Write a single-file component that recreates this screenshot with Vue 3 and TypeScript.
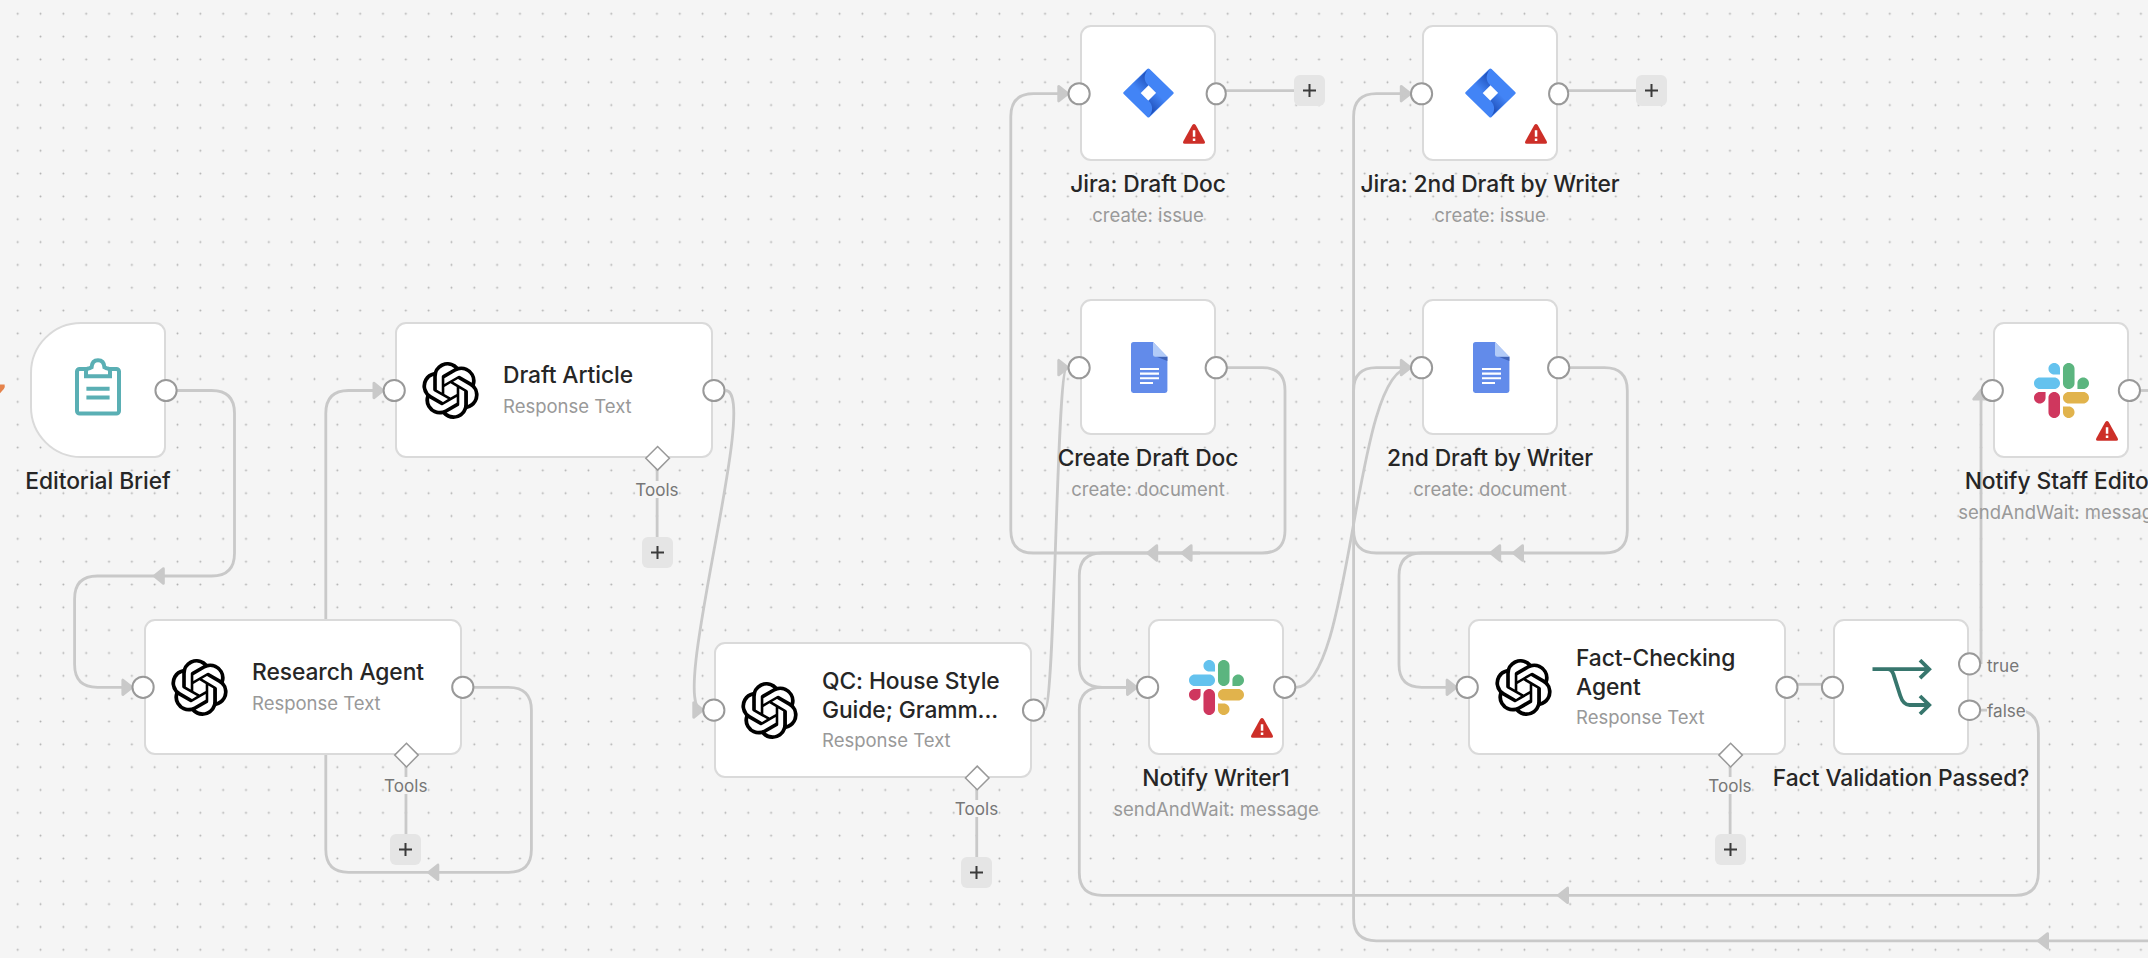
<script setup lang="ts">
type IconName = 'clipboard' | 'openai' | 'jira' | 'docs' | 'slack' | 'branch'

interface FlowNode {
  id: string
  x: number
  y: number
  icon: IconName
  lines: string[]
  sub?: string
  wide?: boolean
  trigger?: boolean
  input?: boolean
  output?: boolean
  addNext?: boolean
  warn?: boolean
}

interface Arrow {
  x: number
  y: number
  dir: 'left' | 'right' | 'up'
}

const GRID = 22.83
const R = 22.8
const NODE = 137

const gx = (column: number): number => 6.2 + column * GRID
const gy = (row: number): number => 2.5 + row * GRID

const nodes: FlowNode[] = [
  { id: 'brief', x: gx(1), y: gy(14), icon: 'clipboard', lines: ['Editorial Brief'], trigger: true, output: true },
  { id: 'research', x: gx(6), y: gy(27), icon: 'openai', lines: ['Research Agent'], sub: 'Response Text', wide: true, input: true, output: true },
  { id: 'draft', x: gx(17), y: gy(14), icon: 'openai', lines: ['Draft Article'], sub: 'Response Text', wide: true, input: true, output: true },
  { id: 'qc', x: gx(31), y: gy(28), icon: 'openai', lines: ['QC: House Style', 'Guide; Gramm...'], sub: 'Response Text', wide: true, input: true, output: true },
  { id: 'jira1', x: gx(47), y: gy(1), icon: 'jira', lines: ['Jira: Draft Doc'], sub: 'create: issue', input: true, addNext: true, warn: true },
  { id: 'jira2', x: gx(62), y: gy(1), icon: 'jira', lines: ['Jira: 2nd Draft by Writer'], sub: 'create: issue', input: true, addNext: true, warn: true },
  { id: 'doc1', x: gx(47), y: gy(13), icon: 'docs', lines: ['Create Draft Doc'], sub: 'create: document', input: true, output: true },
  { id: 'doc2', x: gx(62), y: gy(13), icon: 'docs', lines: ['2nd Draft by Writer'], sub: 'create: document', input: true, output: true },
  { id: 'writer', x: gx(50), y: gy(27), icon: 'slack', lines: ['Notify Writer1'], sub: 'sendAndWait: message', input: true, output: true, warn: true },
  { id: 'fact', x: gx(64), y: gy(27), icon: 'openai', lines: ['Fact-Checking', 'Agent'], sub: 'Response Text', wide: true, input: true, output: true },
  { id: 'if', x: gx(80), y: gy(27), icon: 'branch', lines: ['Fact Validation Passed?'], input: true },
  { id: 'staff', x: gx(87), y: gy(14), icon: 'slack', lines: ['Notify Staff Editor'], sub: 'sendAndWait: message', input: true, output: true, warn: true },
]

/** Orthogonal polyline whose corners are rounded with quadratic curves. */
function step(points: [number, number][]): string {
  let d = `M${points[0][0]} ${points[0][1]}`
  for (let i = 1; i < points.length - 1; i++) {
    const [px, py] = points[i - 1]
    const [cx, cy] = points[i]
    const [nx, ny] = points[i + 1]
    const ax = cx - Math.sign(cx - px) * R
    const ay = cy - Math.sign(cy - py) * R
    const bx = cx + Math.sign(nx - cx) * R
    const by = cy + Math.sign(ny - cy) * R
    d += `L${ax} ${ay}Q${cx} ${cy} ${bx} ${by}`
  }
  const last = points[points.length - 1]
  return `${d}L${last[0]} ${last[1]}`
}

function curve(x1: number, y1: number, x2: number, y2: number, pull: number): string {
  return `M${x1} ${y1}C${x1 + pull} ${y1} ${x2 - pull} ${y2} ${x2} ${y2}`
}

const edges: string[] = [
  step([[170, 390.5], [234.5, 390.5], [234.5, 576], [74.6, 576], [74.6, 687.3], [128, 687.3]]),
  step([[466, 687.3], [531.4, 687.3], [531.4, 872.3], [325.8, 872.3], [325.8, 390.5], [380, 390.5]]),
  curve(725.5, 390.5, 702.5, 710, 36),
  curve(1044.5, 710, 1067, 367.6, 11),
  step([[1220, 367.6], [1285, 367.6], [1285, 553], [1010.8, 553], [1010.8, 93.7], [1064, 93.7]]),
  step([[1200, 553], [1079.3, 553], [1079.3, 687.3], [1132, 687.3]]),
  curve(1296, 687.3, 1410, 367.6, 57),
  step([[1562, 367.6], [1627.3, 367.6], [1627.3, 553], [1353.6, 553], [1353.6, 93.7], [1406, 93.7]]),
  step([[1520, 553], [1399, 553], [1399, 687.3], [1452, 687.3]]),
  step([[2160, 940.9], [1353.6, 940.9], [1353.6, 367.6], [1406, 367.6]]),
  'M1797 684.3H1822',
  'M1981 664V398',
  step([[1972, 710.2], [2038.4, 710.2], [2038.4, 895.3], [1079.3, 895.3], [1079.3, 687.3], [1132, 687.3]]),
  'M2138 390.5H2160',
]

const arrows: Arrow[] = [
  { x: 152.8, y: 576, dir: 'left' },
  { x: 427.3, y: 872.3, dir: 'left' },
  { x: 1146.2, y: 553, dir: 'left' },
  { x: 1180.6, y: 553, dir: 'left' },
  { x: 1489.2, y: 553, dir: 'left' },
  { x: 1512, y: 553, dir: 'left' },
  { x: 1557, y: 895.3, dir: 'left' },
  { x: 2037, y: 940.9, dir: 'left' },
  { x: 133.4, y: 687.3, dir: 'right' },
  { x: 384.5, y: 390.5, dir: 'right' },
  { x: 704.3, y: 710, dir: 'right' },
  { x: 1069.3, y: 93.7, dir: 'right' },
  { x: 1411.8, y: 93.7, dir: 'right' },
  { x: 1069.3, y: 367.6, dir: 'right' },
  { x: 1411.8, y: 367.6, dir: 'right' },
  { x: 1138, y: 687.3, dir: 'right' },
  { x: 1457.6, y: 687.3, dir: 'right' },
  { x: 1981, y: 388.6, dir: 'up' },
]

const turn: Record<Arrow['dir'], number> = { right: 0, left: 180, up: -90 }

const place = (n: FlowNode) => ({ left: `${Math.round(n.x + 0.5)}px`, top: `${Math.round(n.y)}px` })

interface Port { x: number; y: number; rx: number; ry: number }

const ports: Port[] = nodes.flatMap((n) => {
  const list: Port[] = []
  const cy = n.y + 68.4
  const right = n.x + (n.wide ? GRID * 14 : NODE)
  if (n.input) list.push({ x: n.x - 0.1, y: cy, rx: 10.6, ry: 10.6 })
  if (n.output) list.push({ x: right, y: cy, rx: 10.6, ry: 10.6 })
  if (n.addNext) list.push({ x: right, y: cy, rx: 9.6, ry: 10.6 })
  if (n.id === 'if') {
    list.push({ x: right, y: 663.9, rx: 10.6, ry: 10.6 }, { x: right, y: 710.2, rx: 10.6, ry: 9.8 })
  }
  return list
})

const agents = nodes.filter((n) => n.wide)
const openEnded = nodes.filter((n) => n.addNext)
</script>

<template>
  <main class="canvas">
    <svg class="layer" width="2148" height="958" viewBox="0 0 2148 958">
      <defs>
        <pattern id="dots" :width="GRID" :height="GRID" patternUnits="userSpaceOnUse" x="6.3" y="2.35">
          <circle :cx="GRID / 2" :cy="GRID / 2" r="0.95" fill="#b0b0b0" />
        </pattern>
        <linearGradient id="jira-top" x1="24" y1="6" x2="10" y2="20" gradientUnits="userSpaceOnUse">
          <stop offset="0.1" stop-color="#2253bd" />
          <stop offset="0.9" stop-color="#4284f6" />
        </linearGradient>
        <linearGradient id="jira-bottom" x1="27" y1="43" x2="41" y2="29" gradientUnits="userSpaceOnUse">
          <stop offset="0.1" stop-color="#2253bd" />
          <stop offset="0.9" stop-color="#4284f6" />
        </linearGradient>
      </defs>
      <rect width="2148" height="958" fill="url(#dots)" />
      <path d="M0 384.5H4.6Q5.4 387 3.8 389L0 393.2Z" fill="#e5834b" />
      <g class="edges">
        <path v-for="(d, i) in edges" :key="i" :d="d" />
      </g>
      <path
        v-for="(a, i) in arrows"
        :key="`a${i}`"
        class="arrow"
        d="M-10.6 -7.3V7.3L-1.4 0Z"
        :transform="`translate(${a.x} ${a.y}) rotate(${turn[a.dir]})`"
      />
      <g class="edges">
        <path v-for="n in agents" :key="n.id" :d="`M${n.x + 262.8} ${n.y + 142}V${n.y + 216}`" />
        <path v-for="n in openEnded" :key="n.id" :d="`M${n.x + 142} ${n.y + 65.3}h74`" />
      </g>
    </svg>

    <section
      v-for="n in nodes"
      :key="n.id"
      class="node"
      :class="{ wide: n.wide, trigger: n.trigger }"
      :style="place(n)"
    >
      <div class="card">
        <svg v-if="n.icon === 'openai'" class="icon openai" viewBox="0 0 24 24">
          <path d="M22.2819 9.8211a5.9847 5.9847 0 0 0-.5157-4.9108 6.0462 6.0462 0 0 0-6.5098-2.9A6.0651 6.0651 0 0 0 4.9807 4.1818a5.9847 5.9847 0 0 0-3.9977 2.9 6.0462 6.0462 0 0 0 .7427 7.0966 5.98 5.98 0 0 0 .511 4.9107 6.051 6.051 0 0 0 6.5146 2.9001A5.9847 5.9847 0 0 0 13.2599 24a6.0557 6.0557 0 0 0 5.7718-4.2058 5.9894 5.9894 0 0 0 3.9977-2.9001 6.0557 6.0557 0 0 0-.7475-7.0729zm-9.022 12.6081a4.4755 4.4755 0 0 1-2.8764-1.0408l.1419-.0804 4.7783-2.7582a.7948.7948 0 0 0 .3927-.6813v-6.7369l2.02 1.1686a.071.071 0 0 1 .038.052v5.5826a4.504 4.504 0 0 1-4.4945 4.4944zm-9.6607-4.1254a4.4708 4.4708 0 0 1-.5346-3.0137l.142.0852 4.783 2.7582a.7712.7712 0 0 0 .7806 0l5.8428-3.3685v2.3324a.0804.0804 0 0 1-.0332.0615L9.74 19.9502a4.4992 4.4992 0 0 1-6.1408-1.6464zM2.3408 7.8956a4.485 4.485 0 0 1 2.3655-1.9728V11.6a.7664.7664 0 0 0 .3879.6765l5.8144 3.3543-2.0201 1.1685a.0757.0757 0 0 1-.071 0l-4.8303-2.7865A4.504 4.504 0 0 1 2.3408 7.872zm16.5963 3.8558L13.1038 8.364 15.1192 7.2a.0757.0757 0 0 1 .071 0l4.8303 2.7913a4.4944 4.4944 0 0 1-.6765 8.1042v-5.6772a.79.79 0 0 0-.407-.667zm2.0107-3.0231l-.142-.0852-4.7735-2.7818a.7759.7759 0 0 0-.7854 0L9.409 9.2297V6.8974a.0662.0662 0 0 1 .0284-.0615l4.8303-2.7866a4.4992 4.4992 0 0 1 6.6802 4.66zM8.3065 12.863l-2.02-1.1638a.0804.0804 0 0 1-.038-.0567V6.0742a4.4992 4.4992 0 0 1 7.3757-3.4537l-.142.0805L8.704 5.459a.7948.7948 0 0 0-.3927.6813zm1.0976-2.3654l2.602-1.4998 2.6069 1.4998v2.9994l-2.5974 1.4997-2.6067-1.4997Z" />
        </svg>
        <svg v-else-if="n.icon === 'clipboard'" class="icon clipboard" width="46" height="58" viewBox="0 0 46 58">
          <rect x="2" y="11" width="42" height="44.6" rx="2.6" />
          <path d="M11 18.3H35V13.5Q35 10.6 31.6 10.3L29.4 9.2Q29 2.2 23 2.2T16.6 9.2L14.4 10.3Q11 10.6 11 13.5Z" />
          <path d="M11.4 30.8H34.6M11.4 39.6H34.6" />
        </svg>
        <svg v-else-if="n.icon === 'jira'" class="icon jira" width="51" height="50" viewBox="0 0 51 50">
          <path fill="#4284f6" fill-rule="evenodd" d="M24.2 1Q25.4 0 26.6 1L50.2 23.9Q51.2 25 50.2 26.1L26.6 49Q25.4 50 24.2 49L.7 26.1Q-.3 25 .7 23.9ZM25.4 17.2 17.6 25 25.4 32.8 33.2 25Z" />
          <path fill="url(#jira-top)" d="M25.4 .7C20.6 6 20.2 12.4 25.4 17.2L17.6 25 9 16.5Z" />
          <path fill="url(#jira-bottom)" d="M25.4 49.3C30.2 44 30.6 37.6 25.4 32.8L33.2 25 41.8 33.5Z" />
        </svg>
        <svg v-else-if="n.icon === 'docs'" class="icon docs" width="37" height="51" viewBox="0 0 37 51">
          <path fill="#628bea" d="M2.6 0H22L36.4 15V48.6Q36.4 51 34 51H2.4Q0 51 0 48.6V2.6Q0 0 2.6 0Z" />
          <path fill="#3f63b8" d="M25 14.6H36.4V19Z" />
          <path fill="#b2cbf8" d="M22 0 36.4 14.8H24.2Q22 14.8 22 12.6Z" />
          <path fill="#fff" d="M9 26H28v2.1H9ZM9 30.6H28v2.1H9ZM9 35.2H28v2.1H9ZM9 39.9H22v2.1H9Z" />
        </svg>
        <svg v-else-if="n.icon === 'slack'" class="icon slack" width="55" height="55" viewBox="0 0 122.8 122.8">
          <path fill="#cf375e" d="M25.8 77.6c0 7.1-5.8 12.9-12.9 12.9S0 84.7 0 77.6s5.8-12.9 12.9-12.9h12.9v12.9zM32.3 77.6c0-7.1 5.8-12.9 12.9-12.9s12.9 5.8 12.9 12.9v32.3c0 7.1-5.8 12.9-12.9 12.9s-12.9-5.8-12.9-12.9V77.6z" />
          <path fill="#64c2ee" d="M45.2 25.8c-7.1 0-12.9-5.8-12.9-12.9S38.1 0 45.2 0s12.9 5.8 12.9 12.9v12.9H45.2zM45.2 32.3c7.1 0 12.9 5.8 12.9 12.9s-5.8 12.9-12.9 12.9H12.9C5.8 58.1 0 52.3 0 45.2s5.8-12.9 12.9-12.9h32.3z" />
          <path fill="#5bb57f" d="M97 45.2c0-7.1 5.8-12.9 12.9-12.9s12.9 5.8 12.9 12.9-5.8 12.9-12.9 12.9H97V45.2zM90.5 45.2c0 7.1-5.8 12.9-12.9 12.9s-12.9-5.8-12.9-12.9V12.9C64.7 5.8 70.5 0 77.6 0s12.9 5.8 12.9 12.9v32.3z" />
          <path fill="#e1b34c" d="M77.6 97c7.1 0 12.9 5.8 12.9 12.9s-5.8 12.9-12.9 12.9-12.9-5.8-12.9-12.9V97h12.9zM77.6 90.5c-7.1 0-12.9-5.8-12.9-12.9s5.8-12.9 12.9-12.9h32.3c7.1 0 12.9 5.8 12.9 12.9s-5.8 12.9-12.9 12.9H77.6z" />
        </svg>
        <svg v-else class="icon branch" width="60" height="56" viewBox="0 0 60 56">
          <path d="M.5 10.2H57.5M48 1.2 57.2 10.2 48 19.2M16 10.2Q19.6 10.4 21.4 15.2L28.2 36.5Q31.2 46 37.6 46H57.5M48 37 57.2 46 48 55" />
        </svg>

        <div v-if="n.wide" class="text">
          <span v-for="line in n.lines" :key="line" class="title">{{ line }}</span>
          <span class="sub">{{ n.sub }}</span>
        </div>

        <svg v-if="n.warn" class="warn" width="22" height="20" viewBox="0 0 22 20">
          <path fill="#cd2f28" d="M9.3 1Q11-1 12.7 1L21.7 17.2Q22.6 19.6 20.3 19.8H1.7Q-.6 19.6 .3 17.2Z" />
          <path fill="#fff" d="M9.8 6.2h2.5v6.6h-2.5ZM9.8 14.4h2.5v2.5h-2.5Z" />
        </svg>
      </div>
      <div v-if="!n.wide" class="caption">
        <span class="title">{{ n.lines[0] }}</span>
        <span v-if="n.sub" class="sub">{{ n.sub }}</span>
      </div>
    </section>

    <svg class="layer ports" width="2148" height="958" viewBox="0 0 2148 958">
      <ellipse v-for="(p, i) in ports" :key="i" :cx="p.x" :cy="p.y" :rx="p.rx" :ry="p.ry" />
      <path
        v-for="n in agents"
        :key="n.id"
        class="diamond"
        :d="`M${n.x + 263.3} ${n.y + 124.4}l11.8 11.8l-11.8 11.8l-11.8 -11.8Z`"
      />
    </svg>

    <template v-for="n in agents" :key="n.id">
      <span class="edge-label tools" :style="{ left: `${n.x + 262.6}px`, top: `${n.y + 158.4}px` }">Tools</span>
      <button class="add" :style="{ left: `${n.x + 247.3}px`, top: `${n.y + 215}px` }" aria-label="Add">
        <svg width="13" height="13" viewBox="0 0 13 13"><path d="M6.5 0V13M0 6.5H13" /></svg>
      </button>
    </template>
    <button
      v-for="n in openEnded"
      :key="n.id"
      class="add"
      :style="{ left: `${n.x + 214.8}px`, top: `${n.y + 50}px` }"
      aria-label="Add"
    >
      <svg width="13" height="13" viewBox="0 0 13 13"><path d="M6.5 0V13M0 6.5H13" /></svg>
    </button>
    <span class="edge-label yes">true</span>
    <span class="edge-label no">false</span>
  </main>
</template>

<style>
body {
  margin: 0;
  background: #f5f5f5;
}
</style>

<style scoped>
.canvas {
  position: relative;
  width: 2148px;
  height: 958px;
  overflow: hidden;
  background: #f5f5f5;
  font-family: Inter, "Liberation Sans", sans-serif;
}

.layer {
  position: absolute;
  inset: 0;
}

.edges path {
  fill: none;
  stroke: #c9c9c9;
  stroke-width: 2.8;
}

.arrow {
  fill: #c9c9c9;
  stroke: #c9c9c9;
  stroke-width: 2.8;
  stroke-linejoin: round;
}

.node {
  position: absolute;
  width: 136px;
}

.node.wide {
  width: 318px;
}

.card {
  position: relative;
  display: flex;
  align-items: center;
  justify-content: center;
  box-sizing: border-box;
  height: 136px;
  border: 2px solid #dadada;
  border-radius: 11px;
  background: #fff;
}

.wide .card {
  justify-content: flex-start;
  padding-left: 25px;
}

.trigger .card {
  border-radius: 51px 11px 11px 51px;
}

.icon {
  flex: none;
  display: block;
}

.openai {
  width: 57px;
  height: 57px;
  margin-right: 24px;
}

.clipboard {
  position: relative;
  top: -3px;
  fill: #fff;
  stroke: #5aafb4;
  stroke-width: 4;
}

.docs {
  margin-left: 3px;
}

.branch {
  margin-left: 2px;
  fill: none;
  stroke: #37766d;
  stroke-width: 3.8;
}

.text {
  display: flex;
  flex-direction: column;
}

.title {
  font-size: 22.8px;
  font-weight: 500;
  line-height: 28.2px;
  letter-spacing: -0.07px;
  color: #262626;
  white-space: nowrap;
}

.sub {
  margin-top: 3px;
  font-size: 18.5px;
  line-height: 26px;
  color: #999;
  white-space: nowrap;
}

.warn {
  position: absolute;
  right: 9px;
  bottom: 15px;
}

.caption {
  display: flex;
  flex-direction: column;
  align-items: center;
  width: 400px;
  margin: 9px 0 0 -132px;
}

.caption .sub {
  margin-top: 4px;
}

.ports ellipse,
.ports .diamond {
  fill: #fff;
  stroke: #999;
  stroke-width: 2;
}

.ports .diamond {
  stroke-width: 1.5;
}

.edge-label {
  position: absolute;
  background: #f5f5f5;
  font-size: 17.1px;
  line-height: 17px;
  color: #777;
  white-space: nowrap;
}

.tools {
  transform: translateX(-50%);
}

.yes {
  left: 1987px;
  top: 657px;
}

.no {
  left: 1987px;
  top: 702px;
}

.add {
  position: absolute;
  display: flex;
  align-items: center;
  justify-content: center;
  width: 31px;
  height: 31px;
  padding: 0;
  border: 0;
  border-radius: 6px;
  background: #e5e5e5;
}

.add path {
  fill: none;
  stroke: #3a3a3a;
  stroke-width: 2;
}
</style>
